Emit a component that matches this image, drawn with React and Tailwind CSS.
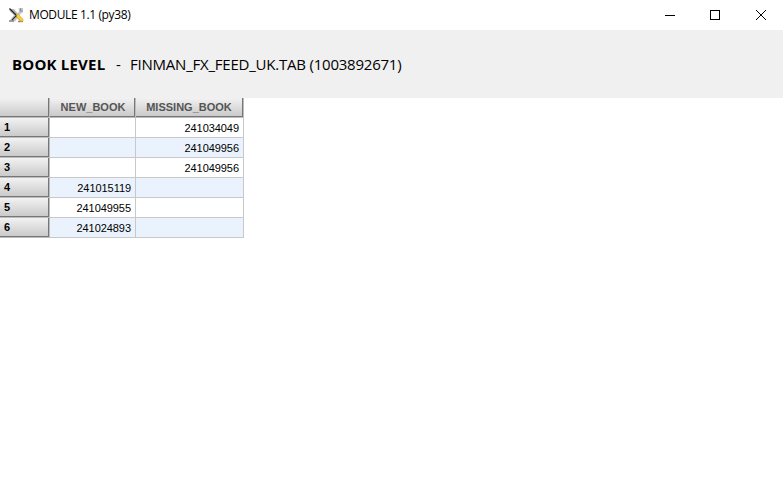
const rows = [
  ['', '241034049'],
  ['', '241049956'],
  ['', '241049956'],
  ['241015119', ''],
  ['241049955', ''],
  ['241024893', ''],
];

function ToolsIcon() {
  return (
    <svg width="16" height="16" viewBox="0 0 16 16" fill="none">
      <path d="M1 2h5l6 7-3 2L2 4.5z" fill="#b4b9bb" />
      <path d="M1 14.5h6L9.5 11 6 8z" fill="#c1c5c7" />
      <path d="M1 14h5" stroke="#8b9194" strokeWidth="1.6" />
      <path d="m6.5 9.5 4.5-5L10.5 1.5 15 1v4L9 10z" fill="#c3c8ca" />
      <path d="M12.5 1v3h2.5" stroke="#8b9194" strokeWidth="1.2" />
      <path d="M10 14.5h5" stroke="#888" strokeWidth="1.4" />
      <path d="M1.5 1.5 8.5 8.5" stroke="#222" strokeWidth="1.3" />
      <path d="M9.5 9 13.5 13" stroke="#c8961c" strokeWidth="3.6" strokeLinecap="round" />
      <path d="M9.5 8.8 13.7 12.8" stroke="#fccb3a" strokeWidth="2.7" strokeLinecap="round" />
      <path d="M8.5 8.5 4 13" stroke="#333" strokeWidth="1.1" />
    </svg>
  );
}

function HeaderCell({ children, className = '' }) {
  return (
    <div className="border-b border-r border-[#bcbcbc]">
      <div
        className={`flex h-[19px] items-center border-b border-r border-[#777] bg-linear-to-b from-[#f2f2f2] to-[#cacaca] text-[11px] font-bold leading-none ${className}`}
      >
        {children}
      </div>
    </div>
  );
}

function Cell({ children, shaded }) {
  return (
    <div
      className={`flex h-5 items-center justify-end border-b border-r border-[#c8c8c8] pr-1 pt-0.5 text-[11px] leading-none tracking-[-0.06px] text-black ${shaded ? 'bg-[#eaf3fd]' : 'bg-white'}`}
    >
      {children}
    </div>
  );
}

export default function App() {
  return (
    <div className="flex h-[490px] w-[783px] flex-col overflow-hidden bg-white">
      <header className="flex h-[30px] shrink-0 items-center bg-white pl-2">
        <ToolsIcon />
        <h1 className="ml-[5px] whitespace-nowrap font-['Open_Sans','Noto_Sans',sans-serif] text-[12px] leading-none tracking-[-0.38px] text-black">
          MODULE 1.1 (py38)
        </h1>
        <div className="ml-auto flex pr-4">
          <svg width="103" height="12" viewBox="0 0 103 12" fill="none" stroke="#000" shapeRendering="crispEdges">
            <path d="M1 6.5h10" />
            <path d="M46.5 1.5h9v9h-9z" />
            <path d="m92 1 10 10M102 1 92 11" shapeRendering="auto" />
          </svg>
        </div>
      </header>
      <section className="flex h-[68px] shrink-0 items-center whitespace-nowrap bg-[#f0f0f0] pl-3 font-['Open_Sans','Noto_Sans',sans-serif] text-[15px] leading-none text-black">
        <strong className="w-[104px] font-bold tracking-[0.2px]">BOOK LEVEL</strong>
        <span className="w-[14px]">-</span>
        <span className="tracking-[-0.22px]">FINMAN_FX_FEED_UK.TAB (1003892671)</span>
      </section>
      <main className="grid w-[244px] grid-cols-[50px_86px_108px] font-['Liberation_Sans',Arial,sans-serif]">
        <HeaderCell />
        <HeaderCell className="justify-center pl-0.5 text-[#555]">NEW_BOOK</HeaderCell>
        <HeaderCell className="justify-center text-[#555]">MISSING_BOOK</HeaderCell>
        {rows.map(([newBook, missingBook], i) => (
          <div key={i} className="contents">
            <HeaderCell className="pl-1 pt-px text-black">{i + 1}</HeaderCell>
            <Cell shaded={i % 2 === 1}>{newBook}</Cell>
            <Cell shaded={i % 2 === 1}>{missingBook}</Cell>
          </div>
        ))}
      </main>
    </div>
  );
}
